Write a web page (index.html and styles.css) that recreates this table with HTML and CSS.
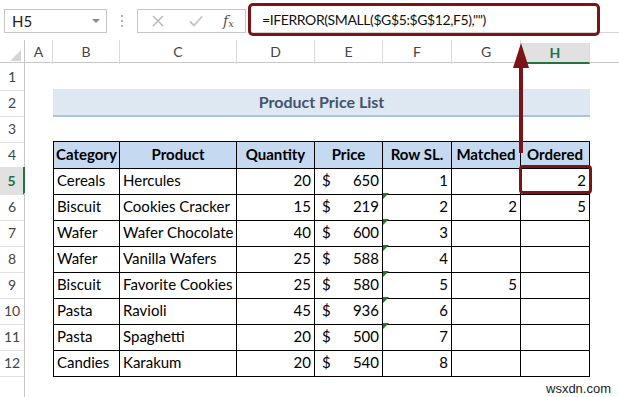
FILE: index.html
```html
<!DOCTYPE html>
<html>
<head>
<meta charset="utf-8">
<link rel="stylesheet" href="styles.css">
</head>
<body>
<div class="page">
  <div class="toolbar">
    <div class="namebox"><span class="nb-text">H5</span><span class="nb-arrow"></span></div>
    <div class="dots"><i></i><i></i><i></i></div>
    <div class="fxbox">
      <svg class="ico" width="12" height="12" viewBox="0 0 12 12"><path d="M1 1 L11 11 M11 1 L1 11" stroke="#b3b3b3" stroke-width="1.3" fill="none"/></svg>
      <svg class="ico" width="14" height="12" viewBox="0 0 14 12"><path d="M1 6.5 L5 10.5 L13 1.5" stroke="#c4c4c4" stroke-width="1.8" fill="none"/></svg>
      <span class="fx">f<sub>x</sub></span>
    </div>
    <div class="formula">=IFERROR(SMALL($G$5:$G$12,F5),"")</div>
  </div>

  <div class="sheet">
    <div class="row colhead">
      <div class="corner"><span class="tri"></span></div>
      <div class="ch">A</div><div class="ch">B</div><div class="ch">C</div><div class="ch">D</div>
      <div class="ch">E</div><div class="ch">F</div><div class="ch">G</div><div class="ch sel">H</div><div class="ch last"></div>
    </div>

    <div class="row"><div class="rh">1</div></div>
    <div class="row"><div class="rh">2</div><div></div><div class="title">Product Price List</div></div>
    <div class="row"><div class="rh">3</div></div>

    <div class="row"><div class="rh">4</div><div></div>
      <div class="c th first">Category</div><div class="c th">Product</div><div class="c th">Quantity</div><div class="c th">Price</div><div class="c th">Row SL.</div><div class="c th">Matched</div><div class="c th">Ordered</div>
    </div>

    <div class="row"><div class="rh rsel">5</div><div></div>
      <div class="c first">Cereals</div><div class="c">Hercules</div><div class="c num">20</div><div class="c price"><span>$</span><span>650</span></div><div class="c num">1</div><div class="c num"></div><div class="c num">2</div>
    </div>
    <div class="row"><div class="rh">6</div><div></div>
      <div class="c first">Biscuit</div><div class="c">Cookies Cracker</div><div class="c num">15</div><div class="c price"><span>$</span><span>219</span></div><div class="c num flag">2</div><div class="c num">2</div><div class="c num">5</div>
    </div>
    <div class="row"><div class="rh">7</div><div></div>
      <div class="c first">Wafer</div><div class="c">Wafer Chocolate</div><div class="c num">40</div><div class="c price"><span>$</span><span>600</span></div><div class="c num flag">3</div><div class="c num"></div><div class="c num"></div>
    </div>
    <div class="row"><div class="rh">8</div><div></div>
      <div class="c first">Wafer</div><div class="c">Vanilla Wafers</div><div class="c num">25</div><div class="c price"><span>$</span><span>588</span></div><div class="c num flag">4</div><div class="c num"></div><div class="c num"></div>
    </div>
    <div class="row"><div class="rh">9</div><div></div>
      <div class="c first">Biscuit</div><div class="c">Favorite Cookies</div><div class="c num">25</div><div class="c price"><span>$</span><span>580</span></div><div class="c num flag">5</div><div class="c num">5</div><div class="c num"></div>
    </div>
    <div class="row"><div class="rh">10</div><div></div>
      <div class="c first">Pasta</div><div class="c">Ravioli</div><div class="c num">45</div><div class="c price"><span>$</span><span>936</span></div><div class="c num flag">6</div><div class="c num"></div><div class="c num"></div>
    </div>
    <div class="row"><div class="rh">11</div><div></div>
      <div class="c first">Pasta</div><div class="c">Spaghetti</div><div class="c num">20</div><div class="c price"><span>$</span><span>500</span></div><div class="c num flag">7</div><div class="c num"></div><div class="c num"></div>
    </div>
    <div class="row"><div class="rh">12</div><div></div>
      <div class="c first">Candies</div><div class="c">Karakum</div><div class="c num">20</div><div class="c price"><span>$</span><span>540</span></div><div class="c num">8</div><div class="c num"></div><div class="c num"></div>
    </div>
    <div class="row"><div class="rh"></div></div>
  </div>

  <div class="hl-formula"></div>
  <div class="hl-cell"></div>
  <svg class="arrow" width="20" height="115" viewBox="0 0 20 115">
    <line x1="10" y1="20" x2="10" y2="110" stroke="#7b1416" stroke-width="4"/>
    <polygon points="2,25 10,0 18,25" fill="#7b1416"/>
  </svg>
  <div class="watermark">wsxdn.com</div>
</div>
</body>
</html>
```

FILE: styles.css
```css
* { box-sizing: border-box; }
html, body { margin: 0; padding: 0; background: #fff; }
body { font-family: Lato, "Open Sans", sans-serif; color: #000; }
.page { position: relative; width: 619px; height: 397px; overflow: hidden; }

.toolbar { height: 40px; display: flex; align-items: flex-start; padding-top: 9px; padding-left: 4px; }
.namebox { width: 103px; height: 24px; border: 1px solid #c6c6c6; display: flex; align-items: center; justify-content: space-between; padding: 0 6px 0 7px; font-size: 15px; color: #222; }
.nb-arrow { width: 0; height: 0; border-left: 4px solid transparent; border-right: 4px solid transparent; border-top: 4px solid #8a8a8a; }
.dots { width: 30px; height: 24px; display: flex; flex-direction: column; align-items: center; justify-content: center; gap: 3px; }
.dots i { display: block; width: 2px; height: 2px; background: #b5b5b5; }
.fxbox { width: 109px; height: 24px; border: 1px solid #c6c6c6; display: flex; align-items: center; padding-left: 14px; gap: 0; }
.fxbox .ico:first-child { margin-right: 25px; }
.fxbox .ico:nth-child(2) { margin-right: 20px; }
.fx { font-family: "DejaVu Serif", serif; font-style: italic; font-size: 14px; color: #555; }
.fx sub { font-size: 10px; vertical-align: -1px; }
.formula { flex: 1; margin-left: 2px; margin-top: -5px; height: 29px; border-bottom: 1px solid #d4d4d4; padding-left: 14px; padding-top: 3px; font-size: 14px; letter-spacing: -0.4px; line-height: 26px; color: #111; }

.sheet { display: flex; flex-direction: column; }
.row { display: grid; grid-template-columns: 25px 28px 67px 117px 78px 68px 69px 69px 69px 29px; height: 26px; }
.colhead { height: 23px; border-bottom: 1px solid #c8c8c8; }
.corner { border-right: 1px solid #c8c8c8; position: relative; }
.tri { position: absolute; right: 3px; bottom: 3px; width: 0; height: 0; border-left: 11px solid transparent; border-bottom: 11px solid #d4d4d4; }
.ch { border-right: 1px solid #dadada; font-size: 14px; color: #444; text-align: center; line-height: 24px; }
.ch.last { border-right: none; }
.ch.sel { background: #e1e1e1; color: #217346; font-weight: bold; border-bottom: 2px solid #217346; margin-top: 3px; line-height: 19px; }

.rh { border-right: 1px solid #c8c8c8; border-bottom: 1px solid #e1e1e1; font-size: 14px; color: #444; text-align: center; line-height: 27px; }
.rh.rsel { background: #e1e1e1; color: #217346; font-weight: bold; border-right: 2px solid #217346; }

.title { grid-column: span 7; background: #dde8f3; border-bottom: 2px solid #a9c3e1; font-weight: bold; font-size: 16px; color: #44546a; text-align: center; line-height: 25px; }

.c { border-right: 1px solid #000; border-bottom: 1px solid #000; font-size: 15px; line-height: 26px; padding: 0 3px; white-space: nowrap; overflow: hidden; position: relative; }
.c.first { border-left: 1px solid #000; }
.c.th { background: #c5d9f1; font-weight: bold; text-align: center; border-top: 1px solid #000; line-height: 24px; }
.c.th.first { text-align: left; padding-left: 2px; }
.c.num { text-align: right; }
.c.price { display: flex; justify-content: space-between; padding-left: 7px; }
.c.flag::before { content: ""; position: absolute; left: 0; top: 0; width: 0; height: 0; border-top: 6px solid #1e7b1e; border-right: 6px solid transparent; }

.hl-formula { position: absolute; left: 248px; top: 3px; width: 352px; height: 33px; border: 3px solid #7b1416; border-radius: 5px; }
.hl-cell { position: absolute; left: 519px; top: 165px; width: 73px; height: 29px; border: 3px solid #7b1416; border-radius: 4px; }
.arrow { position: absolute; left: 511px; top: 43px; }
.watermark { position: absolute; left: 546px; top: 381px; font-family: "Liberation Sans", sans-serif; font-size: 13px; color: #222; }
```
